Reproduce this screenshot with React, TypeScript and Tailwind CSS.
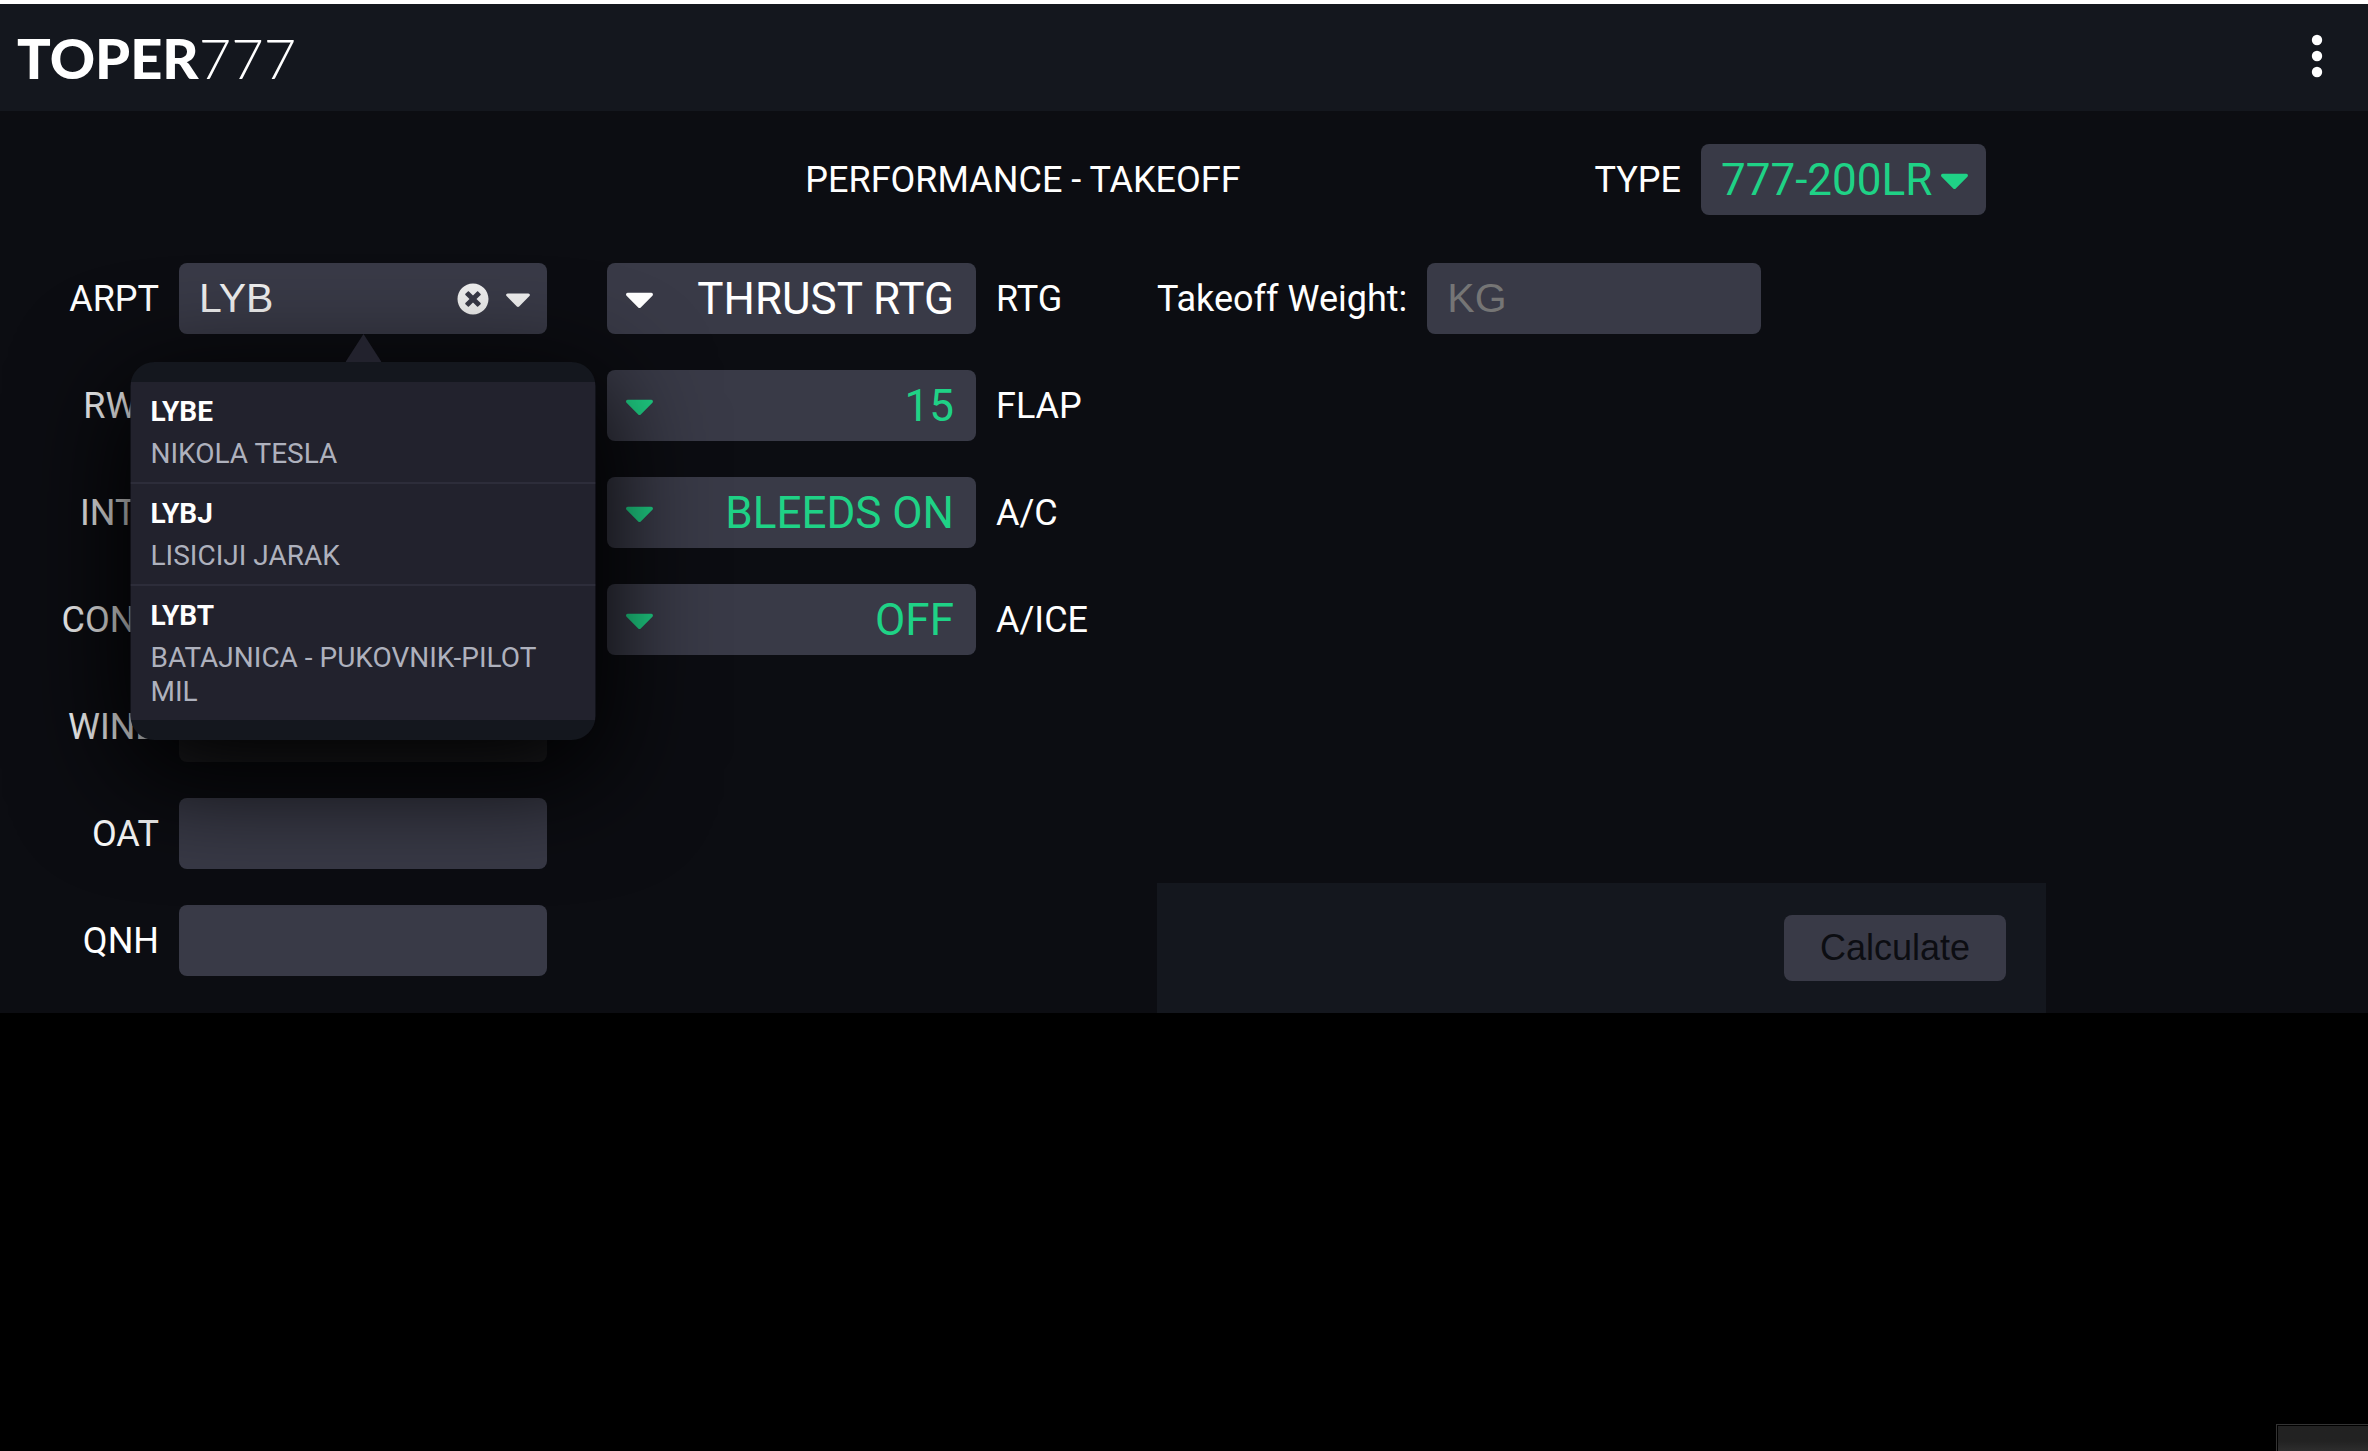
import { useState } from "react";
import type { ReactNode } from "react";
import { FaCaretDown, FaTimesCircle } from "react-icons/fa";

type Airport = { icao: string; name: string };

const AIRPORTS: Airport[] = [
  { icao: "LYBE", name: "NIKOLA TESLA" },
  { icao: "LYBJ", name: "LISICIJI JARAK" },
  { icao: "LYBT", name: "BATAJNICA - PUKOVNIK-PILOT MIL" },
];

const SETTINGS = [
  { id: "rtg", label: "RTG", value: "THRUST RTG", color: "text-white" },
  { id: "flap", label: "FLAP", value: "15", color: "text-[#1fd286]" },
  { id: "ac", label: "A/C", value: "BLEEDS ON", color: "text-[#1fd286]" },
  { id: "aice", label: "A/ICE", value: "OFF", color: "text-[#1fd286]" },
];

const INPUT_CLASS =
  "h-[71px] w-full rounded-lg bg-[#393a47] px-5 font-['Liberation_Sans',sans-serif] text-[41px] outline-none placeholder:text-[#757575]";

function Header() {
  return (
    <header className="flex h-[111px] items-center justify-between border-t-4 border-white bg-[#14171e] pl-[17px] pr-[19px]">
      <h1 className="flex items-baseline font-[Lato,sans-serif] text-[56px] leading-none text-white">
        <span className="font-black">TOPER</span>
        <span className="font-light">777</span>
      </h1>
      <button type="button" aria-label="Menu" className="pb-1 text-white">
        <svg width="64" height="64" viewBox="0 0 64 64" fill="currentColor">
          <circle cx="32" cy="16" r="5.2" />
          <circle cx="32" cy="32" r="5.2" />
          <circle cx="32" cy="48" r="5.2" />
        </svg>
      </button>
    </header>
  );
}

function Field({ id, label, children }: { id: string; label: string; children: ReactNode }) {
  return (
    <div className="flex items-center justify-end gap-5">
      <label htmlFor={id}>{label}</label>
      <div className="relative w-[368px] shrink-0">{children}</div>
    </div>
  );
}

function AirportList({ onSelect }: { onSelect: (icao: string) => void }) {
  return (
    <div className="absolute top-full left-1/2 z-10 w-[465px] -translate-x-1/2">
      <svg className="relative z-10 mx-auto block" width="36" height="28" viewBox="0 0 36 28">
        <path d="M18 0L36 28H0z" fill="#22222d" />
      </svg>
      <ul className="overflow-hidden rounded-3xl bg-[#14171e] py-5 shadow-[0_30px_108px_8px_#000]">
        {AIRPORTS.map((airport) => (
          <li key={airport.icao} className="border-b-2 border-[#2d2d3a] bg-[#22222d] last:border-b-0">
            <button
              type="button"
              className="flex w-full flex-col gap-2 px-5 pt-[13px] pb-[11px] text-left text-[28px] leading-[34px]"
              onClick={() => onSelect(airport.icao)}
            >
              <span className="font-bold text-white">{airport.icao}</span>
              <span className="text-[#aeb1bd]">{airport.name}</span>
            </button>
          </li>
        ))}
      </ul>
    </div>
  );
}

function AirportField() {
  const [query, setQuery] = useState("LYB");
  const [open, setOpen] = useState(true);

  return (
    <Field id="arpt" label="ARPT">
      <input
        id="arpt"
        className={`${INPUT_CLASS} text-[#f0f0f0]`}
        value={query}
        autoComplete="off"
        onChange={(e) => setQuery(e.target.value)}
      />
      <div className="absolute inset-y-0 right-4 flex items-center gap-4 text-[#f0f0f0]">
        <button type="button" aria-label="Clear airport" onClick={() => setQuery("")}>
          <FaTimesCircle size={32} />
        </button>
        <button type="button" aria-label="Show airports" className="w-[26px]" onClick={() => setOpen(!open)}>
          <FaCaretDown className="w-[26px]" size={41} />
        </button>
      </div>
      {open && <AirportList onSelect={(icao) => { setQuery(icao); setOpen(false); }} />}
    </Field>
  );
}

function SettingField({ id, label, value, color }: { id: string; label: string; value: string; color: string }) {
  return (
    <div className="flex items-center gap-5">
      <div className={`relative w-[369px] shrink-0 ${color}`}>
        <select
          id={id}
          className="h-[71px] w-full appearance-none rounded-lg bg-[#393a47] px-[22px] text-[44px] outline-none [text-align-last:right]"
        >
          <option>{value}</option>
        </select>
        <div className="pointer-events-none absolute inset-y-0 left-[18px] flex items-center">
          <FaCaretDown className="w-[29px]" size={47} />
        </div>
      </div>
      <label htmlFor={id}>{label}</label>
    </div>
  );
}

function Toolbar() {
  return (
    <div className="grid grid-cols-[1fr_auto_1fr] items-center">
      <h2 className="col-start-2">PERFORMANCE - TAKEOFF</h2>
      <div className="flex items-center justify-end gap-5 pr-[60px]">
        <label htmlFor="type">TYPE</label>
        <div className="relative w-[285px] text-[#1fd286]">
          <select
            id="type"
            className="h-[71px] w-full appearance-none rounded-lg bg-[#393a47] px-5 text-[44px] outline-none"
          >
            <option>777-200LR</option>
          </select>
          <div className="pointer-events-none absolute inset-y-0 right-[17px] flex items-center">
            <FaCaretDown className="w-[29px]" size={47} />
          </div>
        </div>
      </div>
    </div>
  );
}

export default function App() {
  return (
    <div className="flex min-h-screen flex-col bg-black font-[Roboto,sans-serif] text-[36px] leading-[42px] text-white">
      <Header />

      <main className="bg-[#0c0d12]">
        <div className="max-w-[2046px] pt-[33px]">
          <Toolbar />

          <form className="mt-12 grid grid-cols-[547fr_490fr_889fr] gap-x-[60px]" onSubmit={(e) => e.preventDefault()}>
            <div className="flex flex-col gap-9 pb-[37px]">
              <AirportField />
              <Field id="rwy" label="RWY">
                <input id="rwy" className={INPUT_CLASS} />
              </Field>
              <Field id="intx" label="INTX">
                <input id="intx" className={INPUT_CLASS} />
              </Field>
              <Field id="cond" label="COND">
                <input id="cond" className={INPUT_CLASS} />
              </Field>
              <Field id="wind" label="WIND">
                <input id="wind" disabled className={`${INPUT_CLASS} disabled:bg-[#222226]`} />
              </Field>
              <Field id="oat" label="OAT">
                <input id="oat" className={INPUT_CLASS} />
              </Field>
              <Field id="qnh" label="QNH">
                <input id="qnh" className={INPUT_CLASS} />
              </Field>
            </div>

            <div className="flex flex-col gap-9">
              {SETTINGS.map((setting) => (
                <SettingField key={setting.id} {...setting} />
              ))}
            </div>

            <div className="flex flex-col justify-between">
              <div className="flex items-center gap-5">
                <label htmlFor="weight">Takeoff Weight:</label>
                <div className="w-[334px]">
                  <input id="weight" placeholder="KG" className={INPUT_CLASS} />
                </div>
              </div>
              <div className="flex justify-end bg-[#14171e] px-10 py-8">
                <button
                  type="submit"
                  className="h-[66px] w-[222px] rounded-lg bg-[#393a47] font-['Liberation_Sans',sans-serif] text-[#0c0d12]"
                >
                  Calculate
                </button>
              </div>
            </div>
          </form>
        </div>
      </main>

      {/* Collapsed status tab in the window corner */}
      <div className="mt-auto h-[27px] w-[92px] self-end border-t border-l border-[#333] bg-black pt-px pl-px">
        <div className="h-full bg-linear-to-b from-[#222] from-60% to-[#2d2d2d]" />
      </div>
    </div>
  );
}
